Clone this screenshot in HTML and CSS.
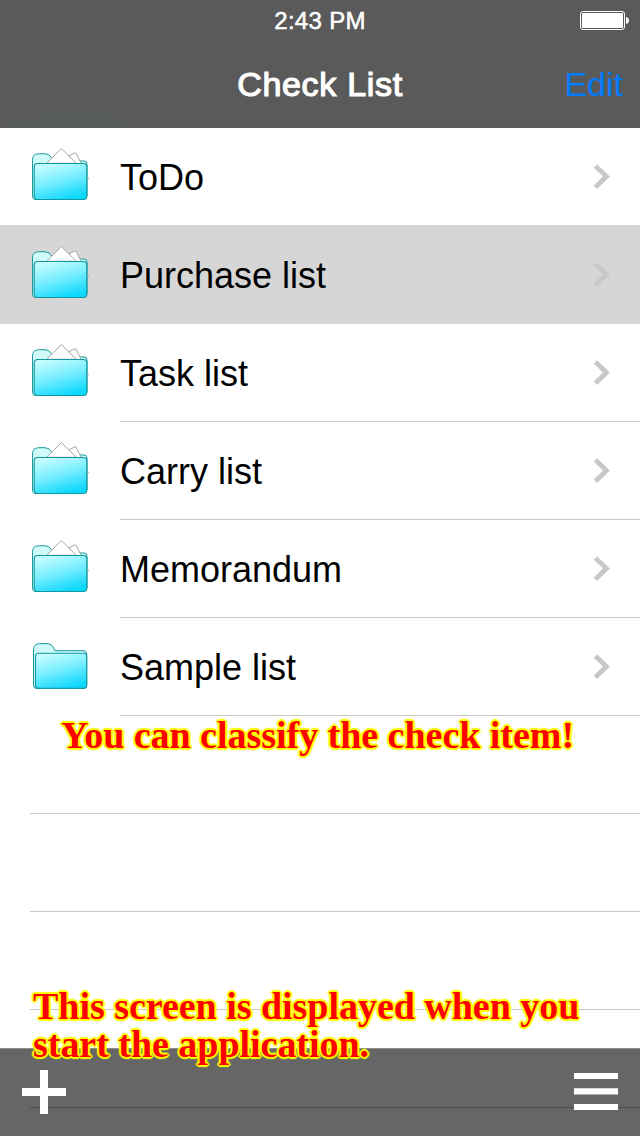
FILE: index.html
```
<!DOCTYPE html>
<html lang="en">

<head>
  <meta charset="UTF-8">
  <meta name="viewport" content="width=device-width, initial-scale=1.0">
  <title>Check List</title>
  <link rel="stylesheet" href="styles.css">
</head>

<body>
  <!-- shared icons -->
  <svg class="sprite" width="0" height="0">
    <defs>
      <linearGradient id="front" x1="0.2" y1="0" x2="0.6" y2="1">
        <stop offset="0" stop-color="#c9fdff" />
        <stop offset="0.5" stop-color="#78eeff" />
        <stop offset="1" stop-color="#0fd8ff" />
      </linearGradient>
    </defs>
    <symbol id="folder-full" viewBox="0 0 60 56">
      <path d="M4.5 53.5Q2.5 53 2.5 50V14Q2.5 8 8.5 7.7H15Q20 8 21.5 12L24 15H54Q57 15 57 18V50Z" fill="#cffcf9" stroke="#1a9c9c" />
      <path d="M39 9.7L45.7 6.6L51.5 18H39Z" fill="#fff" stroke="#a6a6a6" />
      <path d="M16.7 17.3L31.3 2.6L46.3 17.3Z" fill="#fff" stroke="#a6a6a6" />
      <path d="M57.3 30.5L58.6 33H57.3" fill="#fff" stroke="#a6a6a6" stroke-width=".8" />
      <rect x="4.2" y="17.5" width="52.6" height="36" rx="3.5" fill="url(#front)" stroke="#12979f" stroke-width="1.2" />
    </symbol>
    <symbol id="folder-empty" viewBox="0 0 60 56">
      <path d="M6 52.5Q3.5 52 3.5 49V14Q3.5 8 9.5 7.6H16Q22 7.6 23.5 12L25 14.7H54Q56.7 15 56.7 18V49Z" fill="#cffcf9" stroke="#12979f" />
      <rect x="5.5" y="17.2" width="51.2" height="35.2" rx="3" fill="url(#front)" stroke="#12979f" stroke-width="1.1" />
    </symbol>
    <symbol id="chevron" viewBox="0 0 18 26">
      <path d="M2.4 1.9L13.5 12.6L2.4 23.3" fill="none" stroke="#c8c8c8" stroke-width="4.8" />
    </symbol>
  </svg>

  <div class="screen">
    <header class="header">
      <div class="status">
        <span class="time">2:43 PM</span>
        <svg class="battery" viewBox="0 0 49 19">
          <rect x=".5" y=".5" width="44" height="18" rx="2.5" fill="none" stroke="#fff" />
          <rect x="2" y="2" width="41" height="15" rx="1" fill="#fff" />
          <path d="M46 6Q49 6.5 49 9.5Q49 12.5 46 13Z" fill="#fff" />
        </svg>
      </div>
      <div class="navbar">
        <h1 class="title">Check List</h1>
        <a class="edit">Edit</a>
      </div>
    </header>

    <ul class="list">
      <li class="row row--plain">
        <svg class="folder"><use href="#folder-full" /></svg>
        <div class="cell"><span>ToDo</span><svg class="chevron"><use href="#chevron" /></svg></div>
      </li>
      <li class="row row--selected">
        <svg class="folder"><use href="#folder-full" /></svg>
        <div class="cell"><span>Purchase list</span><svg class="chevron"><use href="#chevron" /></svg></div>
      </li>
      <li class="row">
        <svg class="folder"><use href="#folder-full" /></svg>
        <div class="cell"><span>Task list</span><svg class="chevron"><use href="#chevron" /></svg></div>
      </li>
      <li class="row">
        <svg class="folder"><use href="#folder-full" /></svg>
        <div class="cell"><span>Carry list</span><svg class="chevron"><use href="#chevron" /></svg></div>
      </li>
      <li class="row">
        <svg class="folder"><use href="#folder-full" /></svg>
        <div class="cell"><span>Memorandum</span><svg class="chevron"><use href="#chevron" /></svg></div>
      </li>
      <li class="row">
        <svg class="folder"><use href="#folder-empty" /></svg>
        <div class="cell"><span>Sample list</span><svg class="chevron"><use href="#chevron" /></svg></div>
      </li>
      <li class="blank"></li>
      <li class="blank"></li>
      <li class="blank"></li>
      <li class="blank"></li>
    </ul>

    <footer class="toolbar">
      <svg class="tool" viewBox="0 0 44 44">
        <path d="M18 0h8v18h18v8h-18v18h-8v-18h-18v-8h18z" fill="#fff" />
      </svg>
      <svg class="tool" viewBox="0 0 44 44">
        <path d="M0 3h44v6h-44zM0 18.3h44v6.2h-44zM0 34h44v6h-44z" fill="#fff" />
      </svg>
    </footer>

    <p class="note note--top">You can classify the check item!</p>
    <p class="note note--bottom">This screen is displayed when you<br>start the application.</p>
  </div>
</body>

</html>
```
FILE: styles.css
```
* {
  box-sizing: border-box;
}

body {
  margin: 0;
  background-color: #fff;
  font-family: "Liberation Sans", Arial, sans-serif;
}

.sprite {
  position: absolute;
}

.screen {
  position: relative;
  width: 640px;
  height: 1136px;
  overflow: hidden;
}

.header {
  height: 128px;
  color: #fff;
  background:
    linear-gradient(#555c5b, #555c5b) 44px 112px / 64px 8px no-repeat,
    linear-gradient(#555c5b, #555c5b) 12px 120px / 112px 8px no-repeat,
    #5a5a5a;
}

.status {
  display: grid;
  grid-template-columns: 1fr auto 1fr;
  align-items: center;
  height: 41px;
  padding-right: 11px;
  padding-left: 11px;
}

.time {
  grid-column: 2;
  font-size: 24px;
  letter-spacing: 0.3px;
  -webkit-text-stroke: 0.5px #fff;
}

.battery {
  width: 49px;
  height: 19px;
  justify-self: end;
}

.navbar {
  display: grid;
  grid-template-columns: 1fr auto 1fr;
  align-items: center;
  height: 87px;
  padding: 0 17px;
}

.title {
  grid-column: 2;
  margin: 0;
  font-size: 34px;
  font-weight: normal;
  letter-spacing: 0.7px;
  -webkit-text-stroke: 1.2px #fff;
}

.edit {
  justify-self: end;
  font-size: 34px;
  color: #007aff;
}

.list {
  margin: 0;
  padding: 0;
  list-style: none;
}

.row {
  display: flex;
  height: 98px;
  padding-left: 30px;
}

.row--selected {
  height: 99px;
  margin-top: -1px;
  padding-top: 1px;
  background-color: #d6d6d6;
}

.folder {
  flex: none;
  width: 60px;
  height: 56px;
  margin: 18px 30px 0 0;
}

.cell {
  flex: 1;
  display: flex;
  justify-content: space-between;
  align-items: center;
  padding: 2px 29px 0 0;
  border-bottom: 1px solid #c8c8c8;
  font-size: 36px;
}

.row--plain .cell,
.row--selected .cell {
  border-color: transparent;
}

.chevron {
  width: 18px;
  height: 26px;
  margin-bottom: 2px;
}

.blank {
  height: 98px;
  margin-left: 30px;
  border-bottom: 1px solid #c8c8c8;
}

.toolbar {
  position: absolute;
  left: 0;
  right: 0;
  bottom: 0;
  height: 88px;
  padding: 0 22px;
  display: flex;
  justify-content: space-between;
  align-items: center;
  background-color: rgba(0, 0, 0, 0.6);
  box-shadow: inset 0 1px 0 #8c8c8c;
}

.tool {
  width: 44px;
  height: 44px;
}

.note {
  position: absolute;
  margin: 0;
  font: bold 38px/38px "Liberation Serif", "Times New Roman", serif;
  letter-spacing: -0.03px;
  white-space: nowrap;
  color: #f00;
  text-shadow:
    0 0 2px #ff0,
    0 0 3px #ff0,
    1px 1px 1px #ff0,
    -1px 1px 1px #ff0,
    1px -1px 1px #ff0,
    -1px -1px 1px #ff0,
    2px 0 1px #ff0,
    -2px 0 1px #ff0,
    0 2px 1px #ff0,
    0 -2px 1px #ff0;
}

.note--top {
  left: 61px;
  top: 716px;
}

.note--bottom {
  left: 33px;
  top: 987px;
}
```
